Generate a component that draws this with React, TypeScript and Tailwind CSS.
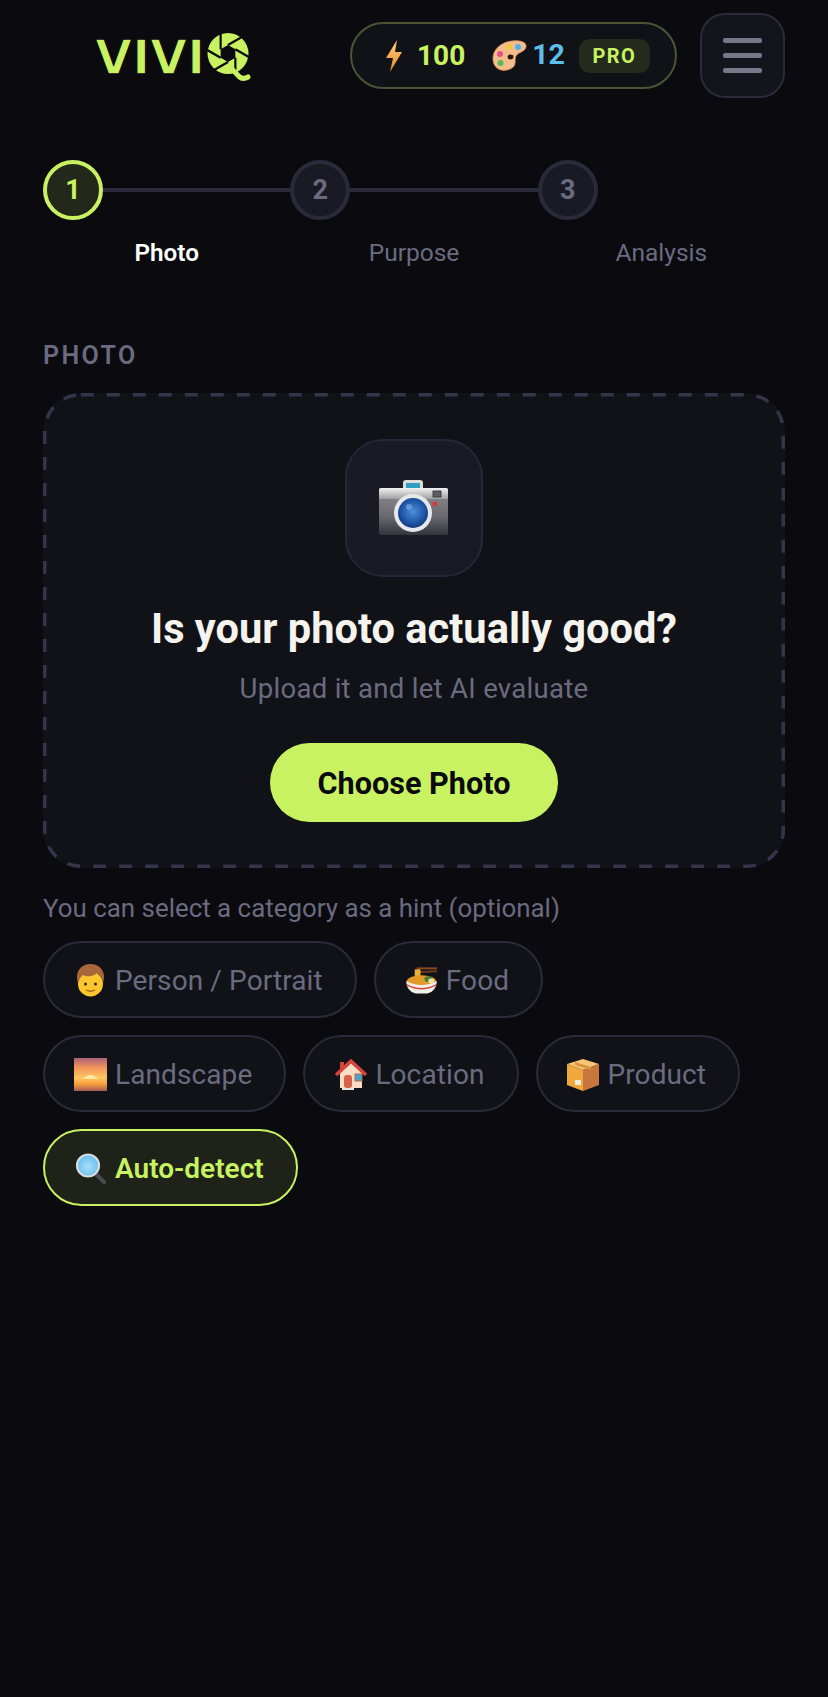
const LIME = '#c8f261';

function LogoQ() {
  const cx = 21;
  const cy = 20.5;
  const r = 8.5;
  const hex = [0, 1, 2, 3, 4, 5].map((i) => {
    const a = ((i * 60 - 30) * Math.PI) / 180;
    return [cx + r * Math.cos(a), cy + r * Math.sin(a)];
  });
  return (
    <svg width="44" height="48" viewBox="0 0 44 48" className="shrink-0">
      <circle cx={cx} cy={cy} r="20.5" fill={LIME} />
      <polygon points={hex.map((p) => p.join(',')).join(' ')} fill="#0a0a0f" />
      {hex.map((p, i) => {
        const prev = hex[(i + 5) % 6];
        const dx = (p[0] - prev[0]) / r;
        const dy = (p[1] - prev[1]) / r;
        return (
          <line
            key={i}
            x1={p[0]}
            y1={p[1]}
            x2={p[0] + dx * 17}
            y2={p[1] + dy * 17}
            stroke="#0a0a0f"
            strokeWidth="2.2"
          />
        );
      })}
      <path d="M24 35 L32 43.5 Q36 47 41 44" fill="none" stroke={LIME} strokeWidth="5" strokeLinecap="round" />
    </svg>
  );
}

function BoltIcon() {
  return (
    <svg width="18" height="32" viewBox="0 0 18 32" className="shrink-0">
      <defs>
        <linearGradient id="bolt" x1="0" y1="0" x2="0" y2="1">
          <stop offset="0" stopColor="#ffd27a" />
          <stop offset="1" stopColor="#e8862a" />
        </linearGradient>
      </defs>
      <path d="M12 0 L1 18 L8 18 L5 32 L17 12 L10 12 Z" fill="url(#bolt)" />
    </svg>
  );
}

function PaletteIcon() {
  return (
    <svg width="35" height="31" viewBox="0 0 35 31" className="shrink-0">
      <path
        d="M1 20 C0 10 9 2 20 1 C28 0 35 2 34 7 C33 12 26 12 24 16 C22 20 25 25 20 28 C12 33 2 30 1 20 Z"
        fill="#f6bd8c"
        stroke="#d98f58"
        strokeWidth="0.8"
      />
      <ellipse cx="18.5" cy="17" rx="3" ry="2.4" fill="#2b1a12" />
      <circle cx="8" cy="14" r="3" fill="#e9508c" />
      <circle cx="17" cy="7" r="3" fill="#f5c73d" />
      <circle cx="26" cy="7" r="3" fill="#4fb2e8" />
      <circle cx="8.5" cy="23" r="3" fill="#57b85c" />
    </svg>
  );
}

function CameraIcon() {
  return (
    <svg width="70" height="56" viewBox="0 0 70 56">
      <defs>
        <linearGradient id="cam-body" x1="0" y1="0" x2="0" y2="1">
          <stop offset="0" stopColor="#8c8c90" />
          <stop offset="0.6" stopColor="#6a6a70" />
          <stop offset="1" stopColor="#33333c" />
        </linearGradient>
        <linearGradient id="cam-top" x1="0" y1="0" x2="0" y2="1">
          <stop offset="0" stopColor="#f2f2f2" />
          <stop offset="1" stopColor="#a0a0a4" />
        </linearGradient>
        <radialGradient id="cam-lens" cx="0.5" cy="0.45" r="0.55">
          <stop offset="0" stopColor="#4f8fd8" />
          <stop offset="0.7" stopColor="#1f55a8" />
          <stop offset="1" stopColor="#123a78" />
        </radialGradient>
      </defs>
      <path d="M24 9 L24 3 Q24 0 27 0 L41 0 Q44 0 44 3 L44 9 Z" fill="#dcdcdc" />
      <rect x="27" y="3" width="14" height="6" fill="#2f9fc0" />
      <rect x="0" y="8" width="69" height="47" rx="2" fill="url(#cam-body)" />
      <path d="M0 10 Q0 8 2 8 L67 8 Q69 8 69 10 L69 19 L0 19 Z" fill="url(#cam-top)" />
      <rect x="54" y="11" width="8" height="6" fill="#5c5c62" stroke="#2c2c30" strokeWidth="0.8" />
      <circle cx="56" cy="24" r="2.4" fill="#d9343a" />
      <circle cx="34" cy="33" r="19" fill="#e6e8ec" />
      <circle cx="34" cy="33" r="15" fill="url(#cam-lens)" />
      <circle cx="30" cy="27" r="3" fill="#7fb2e8" opacity="0.6" />
    </svg>
  );
}

function PersonIcon() {
  return (
    <svg width="31" height="33" viewBox="0 0 31 33" className="shrink-0">
      <circle cx="15.5" cy="20" r="12.5" fill="#fbc62f" />
      <path
        d="M3 19 C-1 7 7 0 15.5 0 C24 0 32 7 28 19 C27 15 25 11 22 9 C18 13 11 13 8 11 C6 13 4 15 3 19 Z"
        fill="#a9683c"
      />
      <circle cx="10.5" cy="20" r="1.5" fill="#3a2a1a" />
      <circle cx="20.5" cy="20" r="1.5" fill="#3a2a1a" />
      <path d="M11 26 Q15.5 28.5 20 26" fill="none" stroke="#a5651c" strokeWidth="1.3" />
    </svg>
  );
}

function RamenIcon() {
  return (
    <svg width="33" height="30" viewBox="0 0 34 30" className="shrink-0">
      <path d="M12 2 L33 2" stroke="#8a4b22" strokeWidth="2" />
      <path d="M12 6 L33 5" stroke="#6e3a18" strokeWidth="2" />
      <rect x="10" y="3" width="6" height="13" fill="#e8b13a" />
      <ellipse cx="17" cy="15" rx="15" ry="6" fill="#e39a28" />
      <ellipse cx="24" cy="13" rx="4" ry="3" fill="#3e7a3a" />
      <ellipse cx="27" cy="15" rx="3" ry="2.5" fill="#f3e2a8" />
      <path d="M1 15 Q17 23 33 15 Q32 26 23 28 L11 28 Q2 26 1 15 Z" fill="#f2eeea" />
      <path d="M2 19 Q17 27 32 19" fill="none" stroke="#d8483a" strokeWidth="1.4" />
    </svg>
  );
}

function SunriseIcon() {
  return (
    <svg width="33" height="33" viewBox="0 0 33 33" className="shrink-0">
      <defs>
        <linearGradient id="sky" x1="0" y1="0" x2="0" y2="1">
          <stop offset="0" stopColor="#a8607a" />
          <stop offset="0.3" stopColor="#f5945a" />
          <stop offset="0.6" stopColor="#ffc860" />
          <stop offset="0.8" stopColor="#f59a3c" />
          <stop offset="1" stopColor="#a05a5a" />
        </linearGradient>
      </defs>
      <rect width="33" height="33" fill="url(#sky)" />
      <path d="M9 21 Q16.5 13 24 21 Z" fill="#ffe9a0" />
    </svg>
  );
}

function HouseIcon() {
  return (
    <svg width="32" height="32" viewBox="0 0 32 32" className="shrink-0">
      <rect x="5" y="3" width="4" height="7" fill="#d8433a" />
      <path d="M5 14 L16 4 L27 14 L27 29 L5 29 Z" fill="#fbdcc4" />
      <path d="M1 16 L16 2 L31 16" fill="none" stroke="#d8433a" strokeWidth="3.4" />
      <rect x="9" y="16" width="8" height="13" rx="3" fill="#d9604a" />
      <rect x="20" y="15" width="7" height="7" fill="#4fa3c8" stroke="#a8704a" strokeWidth="1" />
      <rect x="7" y="29" width="12" height="2" fill="#e8e4e0" />
    </svg>
  );
}

function BoxIcon() {
  return (
    <svg width="34" height="32" viewBox="0 0 34 32" className="shrink-0">
      <path d="M17 0 L33 5 L17 11 L1 5 Z" fill="#f7c675" />
      <path d="M1 5 L17 11 L17 32 L1 26 Z" fill="#f0a73c" />
      <path d="M33 5 L17 11 L17 32 L33 26 Z" fill="#c8763e" />
      <path d="M9 3 L25 8 L25 11 L9 6 Z" fill="#d9933f" />
      <rect x="9" y="21" width="6" height="5" fill="#f5ece0" />
    </svg>
  );
}

function LensIcon() {
  return (
    <svg width="32" height="32" viewBox="0 0 32 32" className="shrink-0">
      <defs>
        <radialGradient id="glass" cx="0.5" cy="0.55" r="0.55">
          <stop offset="0" stopColor="#a8e0f8" />
          <stop offset="1" stopColor="#62bdf0" />
        </radialGradient>
      </defs>
      <path d="M20 20 L29 29" stroke="#4a4a52" strokeWidth="4" strokeLinecap="round" />
      <circle cx="13" cy="12.5" r="11" fill="url(#glass)" stroke="#d5dce2" strokeWidth="2.2" />
    </svg>
  );
}

const steps = [
  { n: 1, label: 'Photo', active: true },
  { n: 2, label: 'Purpose', active: false },
  { n: 3, label: 'Analysis', active: false },
];

const chipRows = [
  [
    { label: 'Person / Portrait', icon: <PersonIcon /> },
    { label: 'Food', icon: <RamenIcon /> },
  ],
  [
    { label: 'Landscape', icon: <SunriseIcon /> },
    { label: 'Location', icon: <HouseIcon /> },
    { label: 'Product', icon: <BoxIcon /> },
  ],
];

export default function App() {
  return (
    <div className="min-h-[1697px] bg-[#0a0a0f] px-[43px] font-['Roboto',sans-serif] text-[#6b6b80]">
      {/* Header */}
      <header className="flex items-center justify-between pt-[13px]">
        <div className="mt-[3px] ml-[52px] flex items-start gap-[7px]">
          <span className="w-[105px] font-['DejaVu_Sans',sans-serif] text-[48px] leading-[48px] font-bold whitespace-nowrap text-[#c8f261] [-webkit-text-stroke:1.5px_#0a0a0f]">
            VIVI
          </span>
          <LogoQ />
        </div>
        <div className="ml-auto flex h-[67px] w-[327px] items-center rounded-full border-2 border-[#4d5435] bg-[#111218] pl-[33px]">
          <BoltIcon />
          <span className="ml-[14px] text-[28px] font-bold text-[#c8f261]">100</span>
          <span className="ml-[27px]">
            <PaletteIcon />
          </span>
          <span className="ml-[5px] text-[28.5px] font-bold text-[#5bc0eb]">12</span>
          <span className="ml-[14px] flex h-[34px] w-[71px] items-center justify-center rounded-[11px] bg-[#242a1c] text-[20px] font-bold tracking-[1.5px] text-[#c8f261]">
            PRO
          </span>
        </div>
        <button className="ml-[23px] flex size-[85px] flex-col items-center justify-center gap-[10px] rounded-[25px] border-2 border-[#2a2a3a] bg-[#14141c]">
          <span className="h-[5px] w-[39px] rounded-[2px] bg-[#77778b]" />
          <span className="h-[5px] w-[39px] rounded-[2px] bg-[#77778b]" />
          <span className="h-[5px] w-[39px] rounded-[2px] bg-[#77778b]" />
        </button>
      </header>

      {/* Steps */}
      <div className="mt-[62px] grid grid-cols-3">
        {steps.map((step) => (
          <div key={step.n}>
            <div className="flex items-center">
              <div
                className={
                  step.active
                    ? 'flex size-[60px] shrink-0 items-center justify-center rounded-full border-4 border-[#c8f261] bg-[#23281a] pt-[1px] text-[27px] font-bold text-[#c8f261]'
                    : 'flex size-[60px] shrink-0 items-center justify-center rounded-full border-4 border-[#2a2a3a] bg-[#1a1a24] pt-[1px] text-[27px] font-bold text-[#6b6b80]'
                }
              >
                {step.n}
              </div>
              {step.n < 3 && <div className="h-[4px] flex-1 bg-[#2a2a3a]" />}
            </div>
            <p
              className={
                step.active
                  ? 'mt-[17px] text-center text-[24.3px] leading-[32px] font-semibold text-white'
                  : 'mt-[17px] text-center text-[24.5px] leading-[32px] text-[#6b6b80]'
              }
            >
              {step.label}
            </p>
          </div>
        ))}
      </div>

      {/* Photo section */}
      <h2 className="mt-[71px] text-[25px] leading-[32px] font-semibold tracking-[2.4px] text-[#6b6b80]">PHOTO</h2>
      <div className="relative mt-[21px] flex h-[475px] flex-col items-center rounded-[38px] bg-[#111218] pt-[46px]">
        <svg className="pointer-events-none absolute inset-0" width="742" height="475" viewBox="0 0 742 475">
          <rect
            x="1.75"
            y="1.75"
            width="738.5"
            height="471.5"
            rx="36"
            fill="none"
            stroke="#34344a"
            strokeWidth="3.5"
            strokeDasharray="13 13"
          />
        </svg>
        <div className="flex size-[138px] items-center justify-center rounded-[38px] border-2 border-[#26263a] bg-[#1a1a24]">
          <CameraIcon />
        </div>
        <h1 className="mt-[25px] text-[41.6px] leading-[54px] font-bold text-[#f5f3ee]">Is your photo actually good?</h1>
        <p className="mt-[15px] text-[27.5px] leading-[36px] tracking-[0.3px] text-[#6b6b80]">Upload it and let AI evaluate</p>
        <button className="mt-[36px] h-[79px] w-[288px] rounded-full bg-[#c8f261] pt-[2px] text-[30.6px] font-bold text-[#0a0a0f]">
          Choose Photo
        </button>
      </div>

      {/* Category hint */}
      <p className="mt-[24px] text-[25.9px] leading-[32px] text-[#6b6b80]">You can select a category as a hint (optional)</p>
      <div className="mt-[17px] flex flex-col gap-[17px]">
        {chipRows.map((row, i) => (
          <div key={i} className="flex gap-[17px]">
            {row.map((chip) => (
              <div
                key={chip.label}
                className="flex h-[77px] items-center gap-[8px] rounded-full border-2 border-[#2a2a3a] bg-[#111218] pt-[2px] pr-[32px] pl-[29px] text-[28px] tracking-[0.1px]"
              >
                <span className="flex w-[33px] justify-center">{chip.icon}</span>
                {chip.label}
              </div>
            ))}
          </div>
        ))}
        <div className="flex">
          <div className="flex h-[77px] items-center gap-[8px] rounded-full border-2 border-[#c8f261] bg-[#1e2218] pt-[2px] pr-[32px] pl-[29px] text-[28px] font-semibold text-[#c8f261]">
            <span className="flex w-[33px] justify-center">
              <LensIcon />
            </span>
            Auto-detect
          </div>
        </div>
      </div>
    </div>
  );
}
